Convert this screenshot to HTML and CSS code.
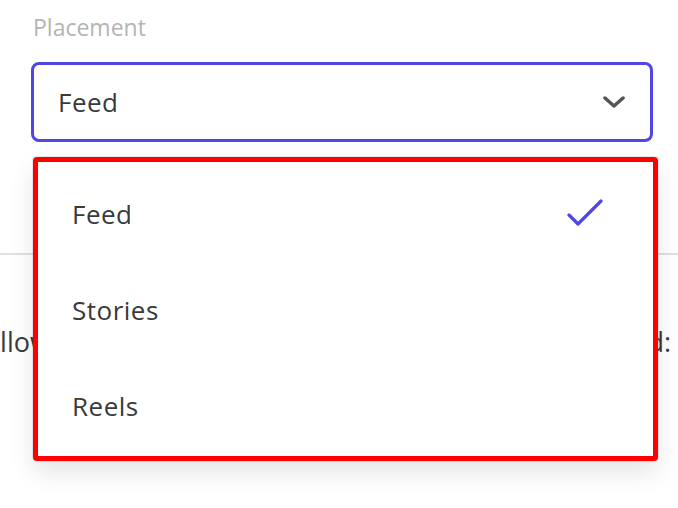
FILE: index.html
```html
<!DOCTYPE html>
<html lang="en">
<head>
    <meta charset="UTF-8">
    <meta name="viewport" content="width=device-width, initial-scale=1.0">
    <title>Placement</title>
    <link rel="stylesheet" href="styles.css">
</head>

<body>
    <div class="field">
        <div class="field-label">Placement</div>
        <div class="select">
            <span class="select-value">Feed</span>
            <svg class="chevron" width="22" height="12" viewBox="0 0 22 12">
                <path d="M2 2 L11 10 L20 2" fill="none" stroke="#555" stroke-width="3.5" stroke-linecap="round" stroke-linejoin="round"/>
            </svg>
        </div>

        <!-- open menu, drawn over the rest of the form -->
        <ul class="menu">
            <li class="menu-item selected">
                <span>Feed</span>
                <svg class="check" width="36" height="28" viewBox="0 0 36 28">
                    <path d="M2 16 L11 25 L34 2" fill="none" stroke="#4f46e5" stroke-width="3.2" stroke-linecap="round" stroke-linejoin="round"/>
                </svg>
            </li>
            <li class="menu-item"><span>Stories</span></li>
            <li class="menu-item"><span>Reels</span></li>
        </ul>
    </div>

    <hr class="divider">

    <div class="row">
        <span class="row-left">Allow comments</span>
        <span class="row-right">Boosted:</span>
    </div>
</body>

</html>
```

FILE: styles.css
```css
html, body {
    height: 100%;
}

body {
    margin: 0;
    min-height: 508px;
    font-family: 'Open Sans', sans-serif;
    color: #3a3a3a;
    background-color: white;
}

.field {
    position: relative;
    margin: 0 25px 0 31px;
    padding-top: 15px;
}

.field-label {
    font-size: 23px;
    line-height: 24px;
    color: #b4b4b4;
    padding-left: 2px;
    margin-bottom: 23px;
}

.select {
    height: 80px;
    box-sizing: border-box;
    border: 3px solid #4f46e5;
    border-radius: 8px;
    display: flex;
    align-items: center;
    justify-content: space-between;
    padding: 0 25px 0 24px;
}

.select-value {
    font-size: 26px;
    letter-spacing: 0.5px;
}

.menu {
    position: absolute;
    top: 157px;
    left: 2px;
    width: 625px;
    height: 304px;
    box-sizing: border-box;
    margin: 0;
    padding: 4px 0;
    list-style: none;
    background-color: white;
    border: 5px solid #ff0000;
    border-radius: 4px;
    box-shadow: 0 0 0 1px rgba(0, 0, 0, 0.08), 0 12px 24px rgba(0, 0, 0, 0.1);
    z-index: 1;
}

.menu-item {
    height: 96px;
    display: flex;
    align-items: center;
    justify-content: space-between;
    padding: 0 50px 0 34px;
    font-size: 26px;
    letter-spacing: 0.5px;
}

.check {
    margin-top: -2px;
}

.divider {
    margin: 111px 0 0;
    border: none;
    border-top: 2px solid #e0e0e0;
}

.row {
    display: flex;
    justify-content: space-between;
    font-size: 27px;
    margin-top: 68px;
}

.row-left {
    margin-left: -17px;
}

.row-right {
    margin-right: 7px;
}
```
